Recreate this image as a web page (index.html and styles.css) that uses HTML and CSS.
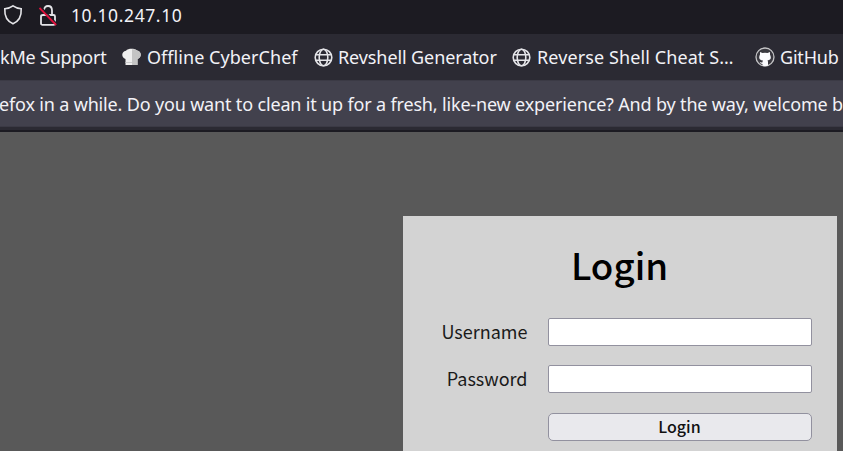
FILE: index.html
```html
<!DOCTYPE html>
<html lang="en">
<head>
<meta charset="utf-8">
<title>Login</title>
<link rel="stylesheet" href="styles.css">
</head>
<body>
<div class="window">
<div class="address-bar">
<svg class="shield" width="20" height="22" viewBox="0 0 20 22"><path d="M10 1.8C7.8 3.4 5 4.4 1.8 4.8C1.4 12 3.4 17 10 19.8C16.6 17 18.6 12 18.2 4.8C15 4.4 12.2 3.4 10 1.8Z"/></svg>
<svg class="lock" width="18" height="21" viewBox="0 0 18 21"><path d="M5 5.5C5 2.7 6.7 1 9 1S13 2.7 13 5.5V9M4 10H14.5Q16 10 16 11.5V18.4Q16 19.8 14.5 19.8H3.5Q2 19.8 2 18.4V11.5Q2 10 4 10Z"/><path class="gap" d="M2 2L18 19"/><path class="slash" d="M.5 3L17.2 20"/></svg>
<span class="url">10.10.247.10</span>
</div>
<nav class="bookmarks">
<a class="mark support"><span>kMe Support</span></a>
<a class="mark chef"><svg width="19" height="18" viewBox="0 0 19 18"><path fill="#eee" d="M3.5 17V11C-1 9.5-.8 3.5 4 2.7C6 .2 13 .2 15 2.6C19.8 3.4 20 9.4 15.5 11V17Z"/><path fill="#c4c4c4" d="M10 17V1.2Q13 .8 15 2.6C19.8 3.4 20 9.4 15.5 11V17Z"/><path fill="none" stroke="#ccc" d="M3.5 14.5H10"/></svg><span>Offline CyberChef</span></a>
<a class="mark rev"><svg class="globe" width="19" height="19" viewBox="0 0 19 19"><circle cx="9.5" cy="9.5" r="8.3"/><ellipse cx="9.5" cy="9.5" rx="4.3" ry="8.3"/><path d="M1.8 6.7H17.2M1.8 12.3H17.2"/></svg><span>Revshell Generator</span></a>
<a class="mark sheet"><svg class="globe" width="19" height="19" viewBox="0 0 19 19"><circle cx="9.5" cy="9.5" r="8.3"/><ellipse cx="9.5" cy="9.5" rx="4.3" ry="8.3"/><path d="M1.8 6.7H17.2M1.8 12.3H17.2"/></svg><span>Reverse Shell Cheat S…</span></a>
<a class="mark git"><svg width="20" height="20" viewBox="0 0 20 20"><circle cx="10" cy="10" r="9" fill="#39383f" stroke="#c4c4c6" stroke-width="1.3"/><path fill="#fbfbfe" d="M5 5L7.5 6Q10 5.4 12.5 6L15 5V7.5Q17.5 13 12.5 13.5Q13 14 13 15V18.5Q10 19.5 7.5 18.5V17Q5.5 17 4.5 14.8Q6 15.8 7.5 15.3Q7.5 14 8 13.5Q2.5 13 5 7.5Z"/></svg><span>GitHub</span></a>
</nav>
<div class="notice"><span>efox in a while. Do you want to clean it up for a fresh, like-new experience? And by the way, welcome b</span></div>
<main class="page">
<form class="card">
<h1>Login</h1>
<div class="fields">
<label for="user">Username</label><input id="user" type="text">
<label for="pass">Password</label><input id="pass" type="password">
<button type="button">Login</button>
</div>
</form>
</main>
</div>
</body>
</html>
```
FILE: styles.css
```css
* { box-sizing: border-box; }
body { margin: 0; }
.window { width: 843px; height: 451px; overflow: hidden; display: flex; flex-direction: column; background: #595959; color: #f2f2f7; font-family: "Noto Sans", sans-serif; font-size: 18px; }
.address-bar { height: 34px; flex: none; display: flex; align-items: center; background: #1c1b22; padding: 0 0 4px 3px; }
.shield, .lock, .globe { fill: none; stroke: #e4e4e8; stroke-width: 1.6; }
.lock { margin-left: 16px; stroke-width: 1.8; }
.lock .gap { stroke: #1c1b22; stroke-width: 1.5; }
.lock .slash { stroke: #e0103c; stroke-width: 1.8; }
.url { margin-left: 14px; font-size: 17.5px; letter-spacing: 0.6px; }
.bookmarks { height: 46px; flex: none; display: flex; align-items: center; background: #2b2a33; white-space: nowrap; }
.mark { display: flex; align-items: center; flex: none; gap: 5px; }
.mark svg { flex: none; }
.support { width: 122px; letter-spacing: -0.2px; }
.chef { width: 192px; letter-spacing: 0.05px; gap: 6px; }
.rev { width: 198px; letter-spacing: -0.1px; }
.sheet { width: 243px; letter-spacing: 0.1px; gap: 6px; }
.git { letter-spacing: -0.2px; }
.notice { height: 51.5px; flex: none; display: flex; align-items: center; background: #42414d; border-top: 1px solid #3b3a45; border-bottom: 5px solid #2b2a33; box-shadow: inset 0 -1px #3b3a45; white-space: nowrap; letter-spacing: -0.165px; position: relative; }
.notice span { margin-left: -1px; }
.notice::after { content: ""; position: absolute; left: 0; right: 0; bottom: -5px; height: 2px; background: #1c1b22; }
.page { flex: 1; display: flex; justify-content: flex-end; align-items: flex-start; padding: 84px 6.5px 0 0; }
.card { width: 434px; height: 260px; background: #d3d3d3; color: #1a1a1a; padding: 21px 25px 0 0; font-family: "Noto Sans CJK JP", sans-serif; }
h1 { margin: 0 0 0 25px; height: 54px; line-height: 54px; text-align: center; font-size: 36.7px; font-weight: 500; color: #000; }
.fields { display: grid; grid-template-columns: 125px 264px; column-gap: 20px; row-gap: 20px; margin-top: 27.5px; grid-auto-rows: 27.5px; align-items: center; }
label { text-align: right; font-size: 18px; line-height: 27px; padding-bottom: 1px; }
input, button { width: 264px; height: 28px; margin: 0; padding: 0; border: 1px solid #92919f; background: #fff; border-radius: 2px; }
button { grid-column: 2; border-radius: 5px; background: #e9e9ed; color: #111; font: 500 16px/25px "Noto Sans CJK JP", sans-serif; padding-bottom: 1px; }
```
